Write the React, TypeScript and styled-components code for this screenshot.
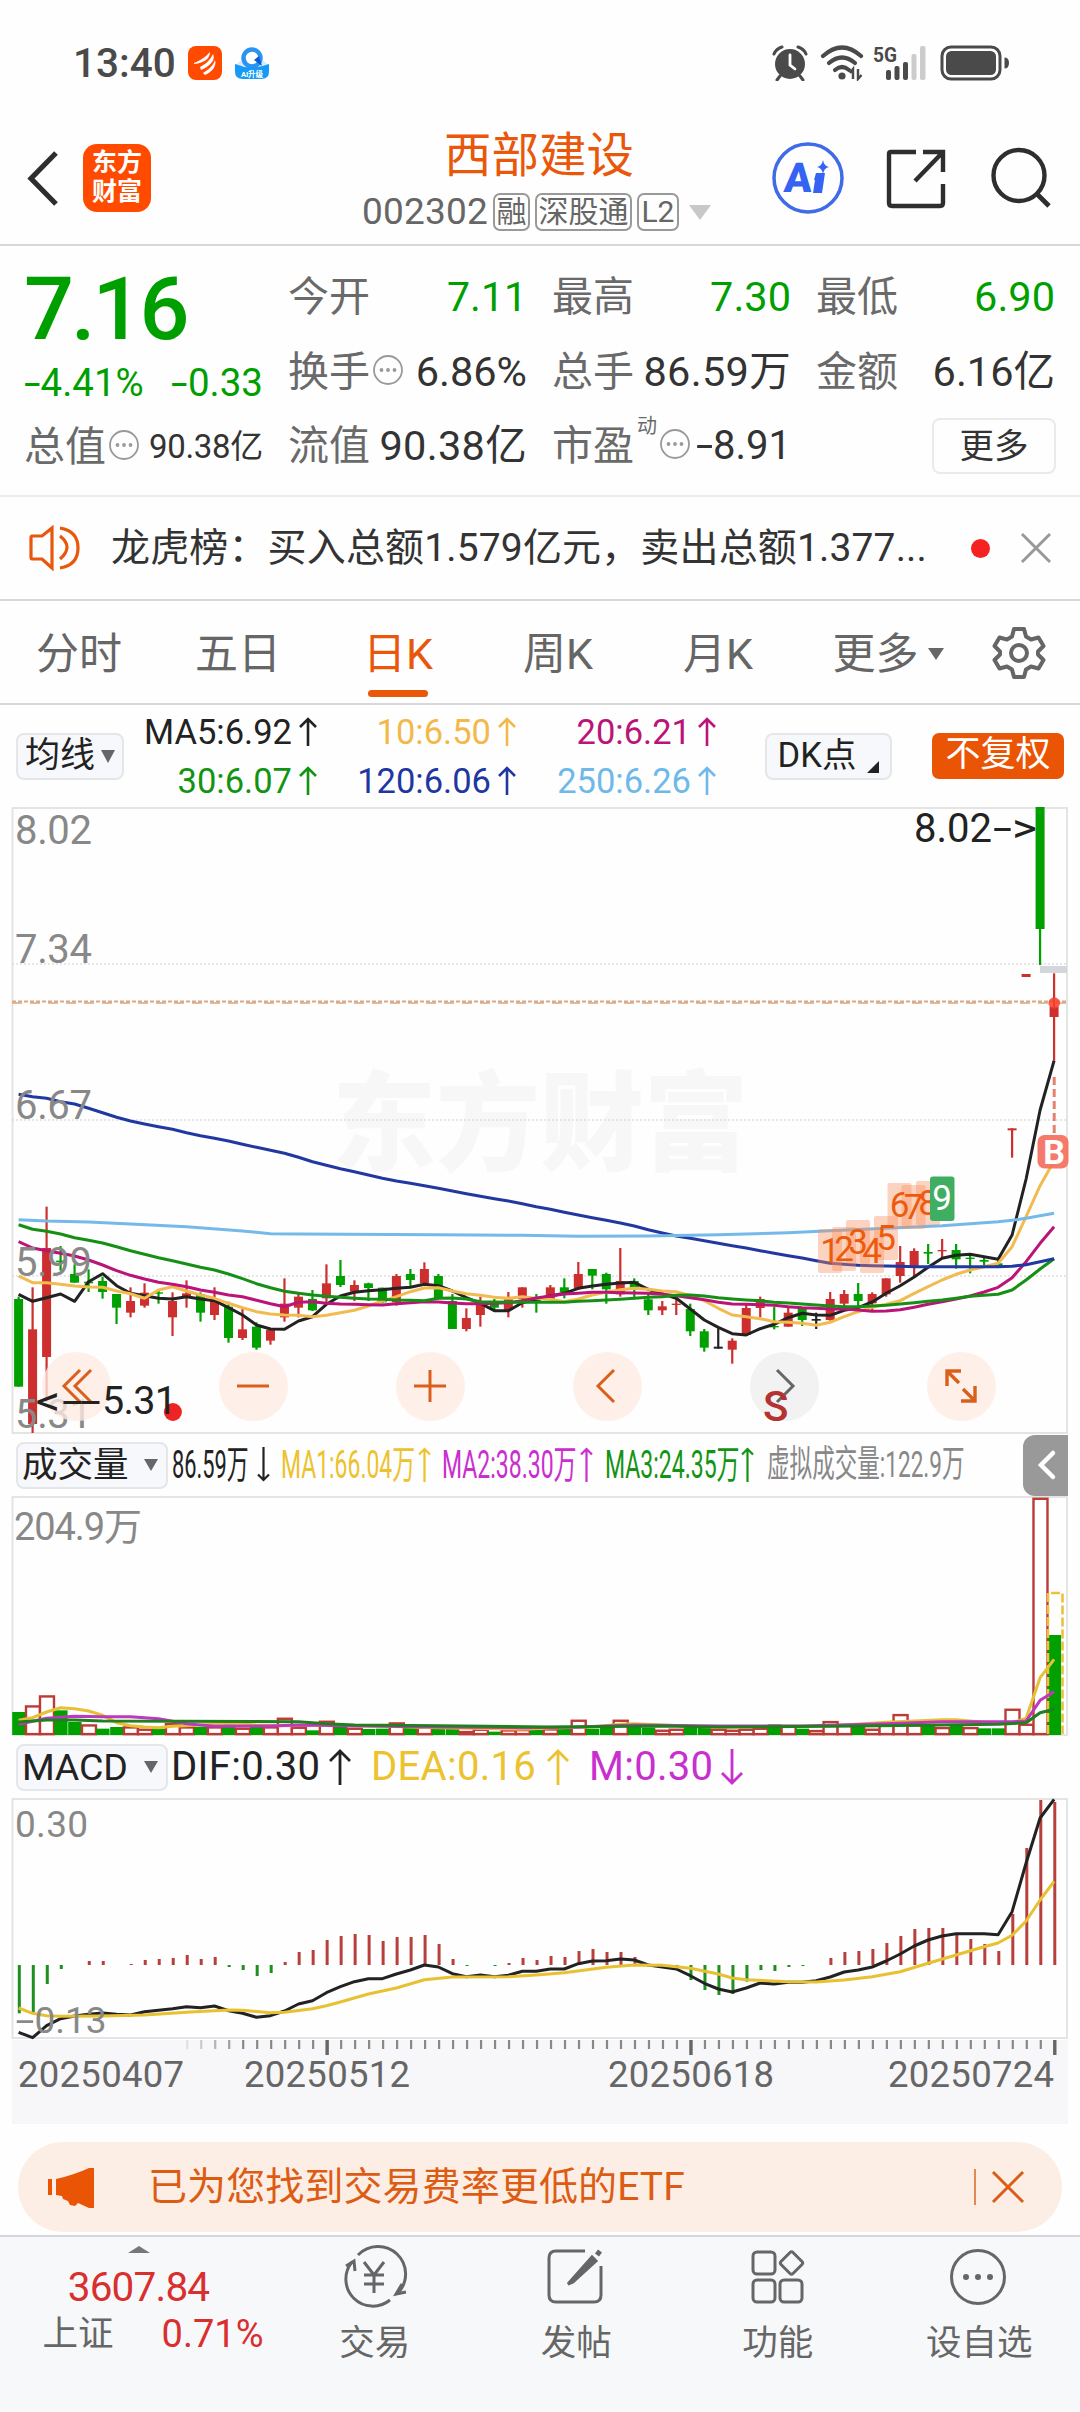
import React from "react";
import styled, { createGlobalStyle } from "styled-components";

const GlobalStyle = createGlobalStyle`
  * { box-sizing: border-box; }
  body {
    margin: 0;
    background: #fefefe;
    font-family: Roboto, "Noto Sans CJK SC", sans-serif;
    color: #333;
  }
  svg { display: block; flex: none; }
`;

const ORANGE = "#e8570a";
const GREEN = "#009f00";
const GREY = "#666";

/* ---------- shared pieces ---------- */

const Screen = styled.div`
  width: 1080px;
  height: 2412px;
  display: flex;
  flex-direction: column;
  overflow: hidden;
`;

const Txt = styled.span<{ $size: number; $color?: string; $ls?: number; $weight?: number }>`
  font-size: ${(p) => p.$size}px;
  line-height: 1.2;
  color: ${(p) => p.$color ?? "#333"};
  letter-spacing: ${(p) => p.$ls ?? 0}px;
  font-weight: ${(p) => p.$weight ?? 400};
  white-space: nowrap;
`;

const Minus = styled.span`
  display: inline-block;
  width: .43em;
  transform: scaleX(1.55);
  transform-origin: left center;
`;

const Fit = styled.span<{ $w: number; $scale: number; $size: number; $color: string }>`
  display: block;
  width: ${(p) => p.$w}px;
  font-size: ${(p) => p.$size}px;
  line-height: 1.2;
  color: ${(p) => p.$color};
  white-space: nowrap;
  transform: scaleX(${(p) => p.$scale});
  transform-origin: left center;
`;

const Caret = styled.i<{ $w: number; $h: number; $color: string }>`
  width: 0;
  height: 0;
  border-left: ${(p) => p.$w / 2}px solid transparent;
  border-right: ${(p) => p.$w / 2}px solid transparent;
  border-top: ${(p) => p.$h}px solid ${(p) => p.$color};
`;

function Arrow({ down, color, w = 18, h = 30, sw = 2.6 }: { down?: boolean; color: string; w?: number; h?: number; sw?: number }) {
  const m = w / 2;
  const d = down
    ? `M${m} 0V${h - 2}M1 ${h - m - 1}L${m} ${h - 2}L${w - 1} ${h - m - 1}`
    : `M${m} ${h}V2M1 ${m + 1}L${m} 2L${w - 1} ${m + 1}`;
  return (
    <svg width={w} height={h}>
      <path d={d} fill="none" stroke={color} strokeWidth={sw} />
    </svg>
  );
}

/* ---------- status bar ---------- */

const Status = styled.div`
  height: 106px;
  padding: 20px 70px 0 73px;
  display: flex;
  align-items: center;
  flex: none;
`;
const StatusIcons = styled.div`
  margin-left: auto;
  display: flex;
  align-items: center;
`;
const Gap = styled.span<{ $w: number }>`
  width: ${(p) => p.$w}px;
  flex: none;
`;

function StatusBar() {
  const c = "#4a4a4a";
  return (
    <Status>
      <Txt $size={40.5} $color={c} $weight={500}>13:40</Txt>
      <Gap $w={12} />
      <svg width="34" height="34" viewBox="0 0 34 34">
        <rect width="34" height="34" rx="8" fill="#ff4a00" />
        <path d="M6 17C11 15 17 12 22 6C22 12 17 17 6 18ZM12 21C18 18 22 14 25 8C28 14 22 20 13 24ZM15 27C20 24 25 20 27 14C29 20 24 26 17 29Z" fill="#fff" />
      </svg>
      <Gap $w={12} />
      <svg width="36" height="34" viewBox="0 0 36 34">
        <path d="M1 20Q8 12 18 12Q28 12 35 20Z" fill="#d4e9fb" />
        <circle cx="18" cy="12" r="8.500" fill="#fff" stroke="#2b93f0" strokeWidth="4.500" />
        <path d="M20 14L28 20L25 10Z" fill="#0a5cd0" />
        <path d="M1 18Q18 25 35 18V26Q35 33 27 33H9Q1 33 1 26Z" fill="#169af5" />
        <text x="18" y="31" fontSize="7.500" textAnchor="middle" fill="#fff" fontWeight="700">AI升级</text>
      </svg>
      <StatusIcons>
        <svg width="36" height="36" viewBox="0 0 36 36">
          <circle cx="18" cy="19" r="15" fill={c} />
          <path d="M2 9Q4 4 10 2M34 9Q32 4 26 2M8 31L5 35M28 31L31 35" stroke={c} strokeWidth="3" fill="none" strokeLinecap="round" />
          <path d="M18 10V20L23 24" stroke="#fff" strokeWidth="2.800" fill="none" strokeLinecap="round" />
        </svg>
        <Gap $w={12} />
        <svg width="44" height="36" viewBox="0 0 44 36">
          <g fill="none" stroke={c} strokeWidth="4.200" strokeLinecap="round">
            <path d="M3 11Q22 -6 41 11" />
            <path d="M9 18Q22 7 35 18" />
            <path d="M15 25Q22 19 29 25" />
          </g>
          <circle cx="22" cy="31" r="3.600" fill={c} />
          <path d="M33 34V24L30 28M38 24V34L41.500 30" fill="none" stroke={c} strokeWidth="2.400" />
        </svg>
        <Gap $w={9} />
        <svg width="54" height="36" viewBox="0 0 54 36">
          <text x="0" y="17" fontSize="21" fontWeight="700" fill={c} textLength="24" lengthAdjust="spacingAndGlyphs">5G</text>
          <g fill={c}>
            <rect x="13" y="25" width="5" height="10" rx="2" />
            <rect x="21.500" y="21" width="5" height="14" rx="2" />
            <rect x="30" y="17" width="5" height="18" rx="2" />
          </g>
          <rect x="38.500" y="9" width="5" height="26" rx="2" fill="#ccc" />
          <rect x="47" y="1" width="5.500" height="34" rx="2" fill="#ccc" />
        </svg>
        <Gap $w={13} />
        <svg width="70" height="36" viewBox="0 0 70 36">
          <rect x="2" y="2" width="58" height="32" rx="9" fill="none" stroke={c} strokeWidth="3" />
          <rect x="6" y="6" width="50" height="24" rx="5.500" fill={c} />
          <path d="M64.500 12.500Q69 12.500 69 18Q69 23.500 64.500 23.500Z" fill={c} />
        </svg>
      </StatusIcons>
    </Status>
  );
}

/* ---------- header ---------- */

const Header = styled.header`
  height: 140px;
  border-bottom: 2px solid #d8d8d8;
  display: grid;
  grid-template-columns: 362px 350px 1fr;
  flex: none;
`;
const HeadLeft = styled.div`
  display: flex;
  align-items: flex-start;
  padding: 38px 0 0 26px;
  gap: 25px;
`;
const Brand = styled.div`
  width: 68px;
  height: 68px;
  border-radius: 14px;
  background: #ff4a00;
  color: #fff;
  font: 600 25px/29px "Liberation Serif", "Noto Sans CJK SC", serif;
  text-align: center;
  padding-top: 4px;
`;
const HeadMid = styled.div`
  display: flex;
  flex-direction: column;
`;
const Title = styled.h1`
  margin: 20px 0 0 82px;
  font-size: 47.500px;
  font-weight: 400;
  line-height: 60px;
  color: ${ORANGE};
  white-space: nowrap;
`;
const CodeRow = styled.div`
  display: flex;
  align-items: center;
  height: 40px;
  margin-top: 6px;
  gap: 5px;
  white-space: nowrap;
`;
const Tag = styled.span<{ $w: number }>`
  width: ${(p) => p.$w}px;
  height: 38px;
  flex: none;
  border: 2px solid #999;
  border-radius: 7px;
  color: ${GREY};
  font-size: 30px;
  line-height: 34px;
  text-align: center;
`;
const HeadRight = styled.div`
  display: flex;
  align-items: flex-start;
  padding: 34px 0 0 60px;
`;

function TopHeader() {
  return (
    <Header>
      <HeadLeft>
        <svg width="32" height="68" viewBox="0 0 32 68">
          <path d="M30 9L5 34.500L30 60" fill="none" stroke="#2e2e2e" strokeWidth="5.200" />
        </svg>
        <Brand>东方<br />财富</Brand>
      </HeadLeft>
      <HeadMid>
        <Title>西部建设</Title>
        <CodeRow>
          <Txt $size={37} $color={GREY} $ls={0.2}>002302</Txt>
          <Tag $w={37}>融</Tag>
          <Tag $w={97}>深股通</Tag>
          <Tag $w={42}>L2</Tag>
          <Gap $w={0} />
          <Caret $w={22} $h={15} $color="#c8c8c8" />
        </CodeRow>
      </HeadMid>
      <HeadRight>
        <svg width="72" height="76" viewBox="0 0 72 76">
          <circle cx="36" cy="38" r="34" fill="none" stroke="#3f6ae8" strokeWidth="3.500" />
          <text x="12" y="52" fontSize="41" fontWeight="900" fill="#3563f2" transform="skewX(-4) translate(3 0)">A</text>
          <path d="M44 33H53L50 53H41L43 40H42Z" fill="#3563f2" />
          <path d="M51 20Q52 26 57 27Q52 28 51 34Q50 28 45 27Q50 26 51 20Z" fill="#3563f2" />
        </svg>
        <Gap $w={41} />
        <svg width="62" height="76" viewBox="0 0 62 76">
          <path d="M31 12H6Q4 12 4 14V63Q4 66 7 66H55Q58 66 58 63V44" fill="none" stroke="#2e2e2e" strokeWidth="4.400" />
          <path d="M38 12H58V32M58 12L30 41" fill="none" stroke="#2e2e2e" strokeWidth="4.400" />
        </svg>
        <Gap $w={44} />
        <svg width="62" height="76" viewBox="0 0 62 76">
          <circle cx="28" cy="35.500" r="25.500" fill="none" stroke="#2e2e2e" strokeWidth="4.400" />
          <path d="M46 54L58 66" stroke="#2e2e2e" strokeWidth="4.800" />
        </svg>
      </HeadRight>
    </Header>
  );
}

/* ---------- quote ---------- */

const Quote = styled.section`
  height: 251px;
  padding: 14px 24px 0;
  display: grid;
  grid-template-columns: repeat(4, 239px);
  column-gap: 25px;
  border-bottom: 2px solid #ececec;
  flex: none;
`;
const Col = styled.div`
  display: flex;
  flex-direction: column;
`;
const Cell = styled.div<{ $h?: number }>`
  height: ${(p) => p.$h ?? 74.5}px;
  display: flex;
  align-items: center;
  justify-content: space-between;
  white-space: nowrap;
`;
const LabelBox = styled.span`
  display: flex;
  align-items: center;
  gap: 3px;
`;
const Label = styled.span`
  font-size: 41px;
  line-height: 50px;
  color: #6a6a6a;
`;
const Sup = styled.sup`
  font-size: 20px;
  line-height: 22px;
  color: #6a6a6a;
  margin-top: -40px;
`;
const MoreButton = styled.button`
  margin: 0 -1px 0 auto;
  width: 124px;
  height: 56px;
  border: 2px solid #e9eaec;
  border-radius: 8px;
  background: #fefefe;
  font: 34.500px/48px Roboto, "Noto Sans CJK SC", sans-serif;
  color: #333;
  padding: 0;
`;

function Dots() {
  return (
    <svg width="30" height="34" viewBox="0 0 30 34">
      <circle cx="15" cy="15" r="14" fill="none" stroke="#999" strokeWidth="1.800" />
      <circle cx="8.500" cy="15" r="1.900" fill="#999" />
      <circle cx="15" cy="15" r="1.900" fill="#999" />
      <circle cx="21.500" cy="15" r="1.900" fill="#999" />
    </svg>
  );
}

function QuotePanel() {
  return (
    <Quote>
      <Col>
        <Cell $h={97}>
          <Txt $size={88} $color={GREEN} $weight={500} $ls={-3}>7.16</Txt>
        </Cell>
        <Cell $h={53}>
          <Txt $size={38.5} $color={GREEN}><Minus>-</Minus>4.41%</Txt>
          <Txt $size={38.5} $color={GREEN}><Minus>-</Minus>0.33</Txt>
        </Cell>
        <Cell $h={74}>
          <LabelBox><Label>总值</Label><Dots /></LabelBox>
          <Txt $size={33} $ls={-0.3}>90.38亿</Txt>
        </Cell>
      </Col>
      <Col>
        <Cell><Label>今开</Label><Txt $size={41} $color={GREEN}>7.11</Txt></Cell>
        <Cell><LabelBox><Label>换手</Label><Dots /></LabelBox><Txt $size={41.5}>6.86%</Txt></Cell>
        <Cell><Label>流值</Label><Txt $size={41.5} $ls={0.3}>90.38亿</Txt></Cell>
      </Col>
      <Col>
        <Cell><Label>最高</Label><Txt $size={41.5} $color={GREEN}>7.30</Txt></Cell>
        <Cell><Label>总手</Label><Txt $size={41.5} $ls={0.3}>86.59万</Txt></Cell>
        <Cell><LabelBox><Label>市盈</Label><Sup>动</Sup><Dots /></LabelBox><Txt $size={40}><Minus>-</Minus>8.91</Txt></Cell>
      </Col>
      <Col>
        <Cell><Label>最低</Label><Txt $size={41.5} $color={GREEN}>6.90</Txt></Cell>
        <Cell><Label>金额</Label><Txt $size={41.5}>6.16亿</Txt></Cell>
        <Cell><MoreButton>更多</MoreButton></Cell>
      </Col>
    </Quote>
  );
}

/* ---------- news ---------- */

const News = styled.section`
  height: 104px;
  display: flex;
  align-items: center;
  padding: 0 28px 0 28px;
  border-bottom: 2px solid #d8d8d8;
  flex: none;
`;
const RedDot = styled.i`
  width: 19px;
  height: 19px;
  margin-left: auto;
  border-radius: 50%;
  background: #f52222;
`;

function NewsBar() {
  return (
    <News>
      <svg width="54" height="46" viewBox="0 0 54 46">
        <g fill="none" stroke={ORANGE} strokeWidth="3.200">
          <path d="M4 11H14L24 3V43L14 34H4Q3 34 3 32V13Q3 11 4 11Z" />
          <path d="M32 11Q46 22 32 34" />
          <path d="M32 3Q50 6 50 23Q50 40 32 43" />
        </g>
      </svg>
      <Gap $w={29} />
      <Txt $size={39} $ls={0.15}>龙虎榜：买入总额1.579亿元，卖出总额1.377...</Txt>
      <RedDot />
      <Gap $w={30} />
      <svg width="32" height="32" viewBox="0 0 32 32">
        <path d="M2 2L30 30M30 2L2 30" stroke="#999" strokeWidth="3" />
      </svg>
    </News>
  );
}

/* ---------- period tabs ---------- */

const Tabs = styled.nav`
  height: 104px;
  display: grid;
  grid-template-columns: 158px 160px 160px 160px 160px 180px 82px;
  border-bottom: 2px solid #d8d8d8;
  flex: none;
`;
const Tab = styled.div<{ $active?: boolean }>`
  display: flex;
  flex-direction: column;
  align-items: center;
  padding-top: 25px;
  font-size: 43px;
  line-height: 56px;
  color: ${(p) => (p.$active ? ORANGE : GREY)};
  white-space: nowrap;
`;
const Underline = styled.i`
  width: 60px;
  height: 7px;
  border-radius: 4px;
  background: ${ORANGE};
  margin-top: 8px;
`;
const Inline = styled.span<{ $gap: number }>`
  display: flex;
  align-items: center;
  gap: ${(p) => p.$gap}px;
`;
const IndexLine = styled(Inline)`
  margin-left: 29px;
`;

function PeriodTabs() {
  return (
    <Tabs>
      <Tab>分时</Tab>
      <Tab>五日</Tab>
      <Tab $active>日K<Underline /></Tab>
      <Tab>周K</Tab>
      <Tab>月K</Tab>
      <Tab><Inline $gap={9}>更多<Caret $w={16} $h={12} $color={GREY} /></Inline></Tab>
      <Tab>
        <svg width="54" height="54" viewBox="0 0 54 54">
          <path
            d="M22 3H32L34 10.500L39 13.500L46.500 11.500L51.500 20L46 25.500V28.500L51.500 34L46.500 42.500L39 40.500L34 43.500L32 51H22L20 43.500L15 40.500L7.500 42.500L2.500 34L8 28.500V25.500L2.500 20L7.500 11.500L15 13.500L20 10.500Z"
            fill="none" stroke={GREY} strokeWidth="4" strokeLinejoin="round"
          />
          <circle cx="27" cy="27" r="8" fill="none" stroke={GREY} strokeWidth="4" />
        </svg>
      </Tab>
    </Tabs>
  );
}

/* ---------- moving average legend ---------- */

const Legend = styled.div`
  height: 102px;
  display: flex;
  align-items: center;
  padding: 0 16px 0 16px;
  flex: none;
`;
const Pill = styled.div<{ $w: number; $gap?: number }>`
  width: ${(p) => p.$w}px;
  height: 47px;
  flex: none;
  display: flex;
  align-items: center;
  justify-content: center;
  gap: ${(p) => p.$gap ?? 6}px;
  border: 2px solid #e4e6ea;
  border-radius: 8px;
  background: #f7f8fb;
`;
const WidePill = styled(Pill)`
  justify-content: space-between;
  padding: 0 8px 0 4px;
`;
const Averages = styled.div`
  width: 570px;
  margin-left: 22px;
  display: grid;
  grid-template-columns: 171px 199px 200px;
  row-gap: 1px;
`;
const Average = styled.div<{ $color: string }>`
  height: 48px;
  display: flex;
  align-items: center;
  justify-content: flex-end;
  gap: 7px;
  font-size: 34.500px;
  line-height: 48px;
  color: ${(p) => p.$color};
  white-space: nowrap;
`;
const Corner = styled.i`
  width: 0;
  height: 0;
  align-self: flex-end;
  margin-bottom: 5px;
  border-left: 12px solid transparent;
  border-bottom: 12px solid #222;
`;
const Adjust = styled.div`
  width: 132px;
  height: 46px;
  margin-left: auto;
  border-radius: 7px;
  background: #ea5405;
  color: #fff;
  font-size: 35px;
  line-height: 44px;
  text-align: center;
`;

const AVERAGES: [string, string][] = [
  ["MA5:6.92", "#222"],
  ["10:6.50", "#f2b94a"],
  ["20:6.21", "#bb1478"],
  ["30:6.07", "#129412"],
  ["120:6.06", "#1f37a0"],
  ["250:6.26", "#6fb9ea"],
];

function AverageLegend() {
  return (
    <Legend>
      <Pill $w={108}><Txt $size={35} $color="#222">均线</Txt><Caret $w={15} $h={13} $color={GREY} /></Pill>
      <Averages>
        {AVERAGES.map(([t, c]) => (
          <Average key={t} $color={c}>{t}<Arrow color={c} h={29} /></Average>
        ))}
      </Averages>
      <Gap $w={49} />
      <Pill $w={127} $gap={11}><Txt $size={34.5} $color="#222">DK点</Txt><Corner /></Pill>
      <Adjust>不复权</Adjust>
    </Legend>
  );
}

/* ---------- charts ---------- */

const X0 = 18.6;
const STEP = 13.993;
const cx = (i: number) => X0 + STEP * i;

type Pt = [number, number];
const line = (pts: Pt[], y: (v: number) => number) => pts.map(([i, v]) => `${cx(i).toFixed(1)},${y(v).toFixed(1)}`).join(" ");
const seq = (vs: number[]): Pt[] => vs.map((v, i) => [i, v]);

const priceY = (v: number) => 323 + v / 3;

// [kind, body top, body bottom, high, low]
const CANDLES: [string, number, number, number, number][] = [
  ["g", 507, 770, 500, 770], ["r", 598, 882, 472, 909], ["r", 354, 681, 230, 815], ["g", 392, 397, 348, 422],
  ["g", 432, 458, 403, 458], ["g", 455, 460, 418, 486], ["g", 453, 486, 440, 506], ["g", 492, 533, 492, 582],
  ["r", 513, 548, 472, 562], ["r", 488, 527, 460, 533], ["g", 487, 491, 478, 521], ["r", 513, 562, 487, 618],
  ["r", 490, 500, 451, 533], ["g", 493, 548, 487, 575], ["r", 513, 555, 472, 570], ["g", 530, 624, 515, 638],
  ["r", 598, 624, 537, 630], ["g", 590, 653, 577, 659], ["r", 600, 632, 598, 644], ["r", 521, 562, 445, 575],
  ["r", 500, 533, 492, 562], ["g", 507, 541, 480, 543], ["r", 460, 505, 403, 520], ["g", 438, 465, 390, 471],
  ["r", 465, 485, 451, 513], ["g", 460, 474, 458, 513], ["g", 473, 517, 473, 520], ["r", 438, 517, 432, 527],
  ["g", 432, 450, 417, 471], ["r", 417, 460, 397, 465], ["g", 438, 507, 432, 508], ["g", 513, 597, 492, 597],
  ["r", 564, 597, 535, 604], ["r", 520, 555, 500, 590], ["g", 515, 533, 507, 545], ["r", 508, 540, 486, 562],
  ["r", 472, 507, 472, 533], ["g", 505, 515, 492, 548], ["r", 472, 507, 465, 510], ["g", 472, 487, 445, 505],
  ["r", 432, 475, 396, 480], ["g", 417, 437, 417, 478], ["g", 432, 478, 428, 521], ["r", 453, 493, 354, 500],
  ["g", 453, 472, 445, 508], ["g", 508, 541, 487, 555], ["r", 529, 541, 513, 555], ["r", 521, 525, 500, 555],
  ["g", 537, 604, 521, 618], ["g", 604, 653, 597, 665], ["k", 650, 656, 595, 656], ["r", 632, 659, 625, 701],
  ["r", 534, 615, 525, 618], ["r", 507, 534, 500, 562], ["g", 588, 592, 530, 598], ["r", 548, 590, 530, 590],
  ["g", 534, 570, 534, 588], ["k", 567, 572, 548, 597], ["r", 507, 570, 486, 572], ["r", 492, 521, 480, 530],
  ["g", 492, 513, 459, 530], ["r", 492, 520, 487, 540], ["r", 445, 493, 445, 500], ["r", 396, 438, 348, 458],
  ["r", 363, 412, 355, 438], ["g", 366, 371, 342, 402], ["r", 360, 364, 327, 382], ["g", 360, 388, 342, 416],
  ["g", 383, 387, 370, 430], ["g", 390, 395, 380, 405], ["g", 400, 408, 388, 410], ["r", -5, 1, -5, 83],
  ["r", -468, -459, -468, -459], ["g", -969, -603, -969, -495], ["r", -370, -339, -470, -208],
];
const FILL: Record<string, string> = { g: "#00a000", r: "#cd2f2f", k: "#222" };

const MA5 = seq([493, 514, 503, 492, 514, 455, 431, 467, 490, 497, 505, 507, 500, 507, 512, 533, 555, 585, 597, 598, 573, 560, 523, 498, 487, 482, 479, 475, 472, 463, 467, 483, 503, 520, 542, 542, 518, 508, 498, 490, 475, 468, 463, 459, 457, 478, 491, 505, 537, 570, 592, 611, 615, 596, 583, 563, 550, 555, 556, 541, 533, 516, 490, 467, 441, 412, 385, 376, 373, 380, 388, 315, 147, -60, -208]);
const MA10 = seq([438, 458, 458, 463, 468, 471, 472, 483, 491, 505, 480, 470, 483, 495, 505, 520, 533, 545, 552, 555, 556, 560, 556, 548, 541, 528, 513, 500, 485, 474, 473, 483, 491, 496, 502, 505, 500, 505, 508, 515, 507, 495, 487, 479, 475, 478, 483, 485, 497, 512, 535, 555, 560, 566, 575, 577, 580, 586, 577, 560, 545, 532, 523, 512, 490, 470, 450, 433, 420, 410, 400, 350, 260, 167, 92]);
const MA20 = seq([335, 354, 362, 370, 378, 390, 405, 422, 436, 447, 457, 463, 470, 480, 487, 495, 500, 511, 521, 530, 517, 515, 520, 522, 523, 524, 525, 521, 518, 515, 516, 519, 521, 521, 520, 518, 512, 504, 498, 492, 490, 487, 487, 488, 489, 490, 493, 497, 503, 509, 517, 522, 523, 524, 526, 530, 533, 535, 537, 537, 540, 544, 543, 539, 532, 523, 515, 507, 498, 486, 472, 443, 395, 340, 290]);
const MA30 = seq([284, 298, 304, 312, 323, 331, 339, 350, 362, 373, 383, 392, 402, 412, 420, 432, 446, 461, 473, 484, 490, 495, 499, 502, 505, 507, 508, 510, 511, 512, 505, 504, 507, 515, 516, 517, 517, 517, 517, 517, 514, 512, 510, 508, 505, 502, 500, 496, 495, 498, 503, 507, 510, 512, 517, 519, 522, 525, 528, 530, 530, 528, 526, 522, 518, 514, 510, 505, 499, 496, 493, 480, 450, 417, 386]);
const MA120 = seq([-107, -100, -95, -85, -78, -65, -52, -38, -27, -18, -10, -2, 8, 17, 25, 33, 43, 52, 61, 70, 82, 95, 106, 116, 125, 135, 145, 153, 160, 167, 175, 183, 191, 199, 206, 213, 221, 230, 238, 247, 255, 263, 271, 279, 288, 299, 309, 318, 325, 332, 340, 347, 354, 362, 370, 377, 384, 392, 400, 403, 406, 407, 408, 409, 410, 410, 410, 410, 410, 410, 410, 409, 404, 395, 386]);
const MA250: Pt[] = [[0, 269], [2, 273], [5, 276], [8, 282], [12, 290], [16, 303], [18, 311], [20, 312], [30, 314], [36, 316], [40, 319], [45, 318], [50, 314], [55, 308], [58, 302], [62, 295], [66, 287], [70, 275], [71, 271], [72, 265], [73, 257], [74, 250]];

// count badges: [digit, x, y]
const COUNTS: [string, number, number][] = [
  ["1", 818, 422], ["2", 832, 420], ["3", 846, 413], ["4", 860, 422], ["5", 874, 409], ["6", 887.5, 376], ["7", 901.5, 378], ["8", 916, 374],
];

const ChartBox = styled.div<{ $h: number }>`
  position: relative;
  height: ${(p) => p.$h}px;
  flex: none;
`;
const Controls = styled.div`
  position: absolute;
  left: 42px;
  top: 545px;
  display: flex;
  gap: 108.500px;
`;
const RoundButton = styled.span<{ $muted?: boolean }>`
  width: 68.500px;
  height: 68.500px;
  border-radius: 50%;
  background: ${(p) => (p.$muted ? "rgba(238,238,238,.75)" : "rgba(254,236,226,.78)")};
  display: flex;
  align-items: center;
  justify-content: center;
`;
const Overlay = styled.svg`
  position: absolute;
  left: 0;
  top: 0;
`;

function Frame({ h }: { h: number }) {
  return <rect x="12.500" y="1" width="1054.500" height={h - 2} fill="none" stroke="#e2e2e2" strokeWidth="1.800" />;
}

function AxisLabel({ x, y, size, w, children, color = "#888", stretch }: { x: number; y: number; size: number; w: number; children: string; color?: string; stretch?: boolean }) {
  return <text x={x} y={y} fontSize={size} fill={color} textLength={w} lengthAdjust={stretch ? "spacingAndGlyphs" : "spacing"}>{children}</text>;
}

const ICONS = ["M24 4L8 20L24 36M35 4L19 20L35 36", "M4 20H36", "M4 20H36M20 4V36", "M27 4L11 20L27 36", "M13 4L29 20L13 36", "M6 20V5H20M6 5L18 17M34 20V35H20M34 35L22 23"];

function PriceChart() {
  return (
    <ChartBox $h={627}>
      <svg width="1080" height="627" viewBox="0 0 1080 627">
        <Frame h={627} />
        <text x="332" y="355" fontSize="108" fontWeight="900" fill="#f7f7f7" textLength="416" lengthAdjust="spacingAndGlyphs">东方财富</text>
        {[157, 313, 469].map((y) => (
          <line key={y} x1="12" x2="1067" y1={y} y2={y} stroke="#cfcfcf" strokeWidth="1" strokeDasharray="2 2" />
        ))}
        <line x1="12" x2="1067" y1="194.500" y2="194.500" stroke="#d8a888" strokeWidth="2" strokeDasharray="4 2" />
        <line x1="12" x2="1067" y1="196" y2="196" stroke="#d8a87c" strokeWidth="1.600" strokeDasharray="10 8" />
        {CANDLES.map(([k, t, b, hi, lo], i) => (
          <g key={i} fill={FILL[k]}>
            <rect x={cx(i) - 1.1} y={priceY(hi)} width="2.200" height={(lo - hi) / 3} />
            <rect x={cx(i) - 4.5} y={priceY(t)} width="9" height={(b - t) / 3} />
          </g>
        ))}
        <g fill="none" strokeWidth="3" strokeLinejoin="round">
          <polyline points={line(MA5, priceY)} stroke="#222" />
          <polyline points={line(MA10, priceY)} stroke="#f2bb50" />
          <polyline points={line(MA20, priceY)} stroke="#bb1478" />
          <polyline points={line(MA30, priceY)} stroke="#159015" />
          <polyline points={line(MA120, priceY)} stroke="#2138a0" />
          <polyline points={line(MA250, priceY)} stroke="#74b9e8" />
        </g>
        {COUNTS.map(([n, x, y]) => (
          <rect key={n} x={x} y={y} width="24" height="44" rx="2" fill="#fb8f5c" fillOpacity=".38" />
        ))}
        {COUNTS.map(([n, x, y]) => (
          <text key={n} x={x + 12} y={y + 34} fontSize="35" textAnchor="middle" fill="#ee5a0c">{n}</text>
        ))}
        <rect x="930" y="369.500" width="24.500" height="44.500" rx="3" fill="#3fae63" />
        <text x="942" y="403" fontSize="35" textAnchor="middle" fill="#fff">9</text>
        <rect x="1040" y="159" width="27" height="7" fill="#d3d6dc" />
        <circle cx="1054.200" cy="196" r="5.800" fill="#f8402c" fillOpacity=".85" />
        <line x1="1054.200" x2="1054.200" y1="270" y2="328" stroke="#e88070" strokeWidth="3" strokeDasharray="8 4" />
        <rect x="1037.500" y="328" width="31" height="33.500" rx="7" fill="#f5705f" fillOpacity=".93" />
        <text x="1054" y="356.500" fontSize="34" fontWeight="700" textAnchor="middle" fill="#fff">B</text>
        <circle cx="172.900" cy="605" r="9" fill="#ee2424" />
        <AxisLabel x={15} y={37} size={40} w={77}>8.02</AxisLabel>
        <AxisLabel x={15} y={156} size={40} w={77}>7.34</AxisLabel>
        <AxisLabel x={15} y={312} size={40} w={77}>6.67</AxisLabel>
        <AxisLabel x={15} y={469} size={40} w={77}>5.99</AxisLabel>
        <AxisLabel x={15} y={621} size={40} w={77}>5.31</AxisLabel>
        <AxisLabel x={914} y={35} size={40} w={78} color="#222">8.02</AxisLabel>
        <AxisLabel x={993} y={35} size={40} w={19} color="#222" stretch>-</AxisLabel>
        <AxisLabel x={1012} y={35} size={40} w={25} color="#222" stretch>&gt;</AxisLabel>
      </svg>
      <Controls>
        {ICONS.map((d, i) => (
          <RoundButton key={d} $muted={i === 4}>
            <svg width="40" height="40" viewBox="0 0 40 40">
              <path d={d} fill="none" stroke={i === 4 ? GREY : "#d8601c"} strokeWidth={i === 5 ? 3.4 : 3} />
            </svg>
          </RoundButton>
        ))}
      </Controls>
      <Overlay width="1080" height="627" viewBox="0 0 1080 627">
        <AxisLabel x={35.5} y={608} size={40} w={25} color="#222" stretch>&lt;</AxisLabel>
        <AxisLabel x={62} y={608} size={40} w={21} color="#222" stretch>-</AxisLabel>
        <AxisLabel x={80} y={608} size={40} w={21} color="#222" stretch>-</AxisLabel>
        <AxisLabel x={102} y={607} size={39.5} w={75} color="#222">5.31</AxisLabel>
        <text x="763" y="614" fontSize="42" fontWeight="500" fill="#b43232">S</text>
      </Overlay>
    </ChartBox>
  );
}

/* ---------- volume ---------- */

const IndicatorRow = styled.div<{ $h: number }>`
  height: ${(p) => p.$h}px;
  display: flex;
  align-items: center;
  padding-left: 16px;
  flex: none;
`;
const FitItem = styled.div<{ $w: number }>`
  width: ${(p) => p.$w}px;
  flex: none;
  display: flex;
  align-items: center;
`;
const Drawer = styled.div`
  margin-left: auto;
  margin-right: 12px;
  width: 45px;
  height: 61px;
  border-radius: 12px 0 0 12px;
  background: #999;
  display: flex;
  align-items: center;
  justify-content: center;
`;

const volY = (v: number) => v / 3 - 65;
const VOLUMES =
  "g843 r823 r793 g838 g873 r880 g893 g888 r886 r893 g893 r876 r886 g888 r886 g880 r890 g888 r886 r860 r887 g898 r869 g882 r890 g894 g893 r874 g890 r887 g892 g890 r900 r893 g902 r895 r894 g897 r892 g893 r866 g893 g888 r866 g888 g890 r896 r893 g890 g890 r893 r896 r893 r890 g880 r882 g893 r897 r870 r879 g885 r893 r876 r849 r880 g884 r888 g882 r888 g892 g892 r833 r878 r200 g612"
    .split(" ").map((s) => [s[0], Number(s.slice(1))] as [string, number]);
const VMA1: Pt[] = [[0, 868], [1, 860], [2, 843], [3, 830], [4, 833], [5, 840], [6, 853], [7, 875], [8, 884], [9, 888], [10, 890], [11, 886], [13, 882], [15, 876], [17, 882], [19, 884], [22, 882], [26, 886], [30, 890], [36, 895], [38, 891], [41, 888], [43, 880], [44, 878], [46, 882], [50, 889], [54, 886], [58, 885], [62, 874], [64, 870], [66, 866], [67, 866], [69, 874], [71, 875], [72, 862], [73, 740], [74, 685]];
const VMA2: Pt[] = [[0, 880], [2, 862], [4, 856], [6, 857], [8, 857], [10, 863], [12, 878], [14, 886], [18, 885], [20, 882], [30, 888], [36, 890], [40, 888], [44, 882], [50, 885], [56, 885], [62, 878], [66, 872], [71, 872], [72, 870], [73, 808], [74, 782]];
const VMA3: Pt[] = [[0, 873], [2, 867], [4, 867], [6, 870], [20, 872], [22, 878], [24, 882], [30, 884], [38, 888], [46, 885], [50, 888], [60, 885], [70, 880], [72, 875], [73, 845], [74, 835]];

const VOLUME_LEGEND: { text: string; color: string; w: number; tw: number; scale: number; down?: boolean }[] = [
  { text: "86.59万", color: "#222", w: 109, tw: 85, scale: 0.56, down: true },
  { text: "MA1:66.04万", color: "#ecc22e", w: 161, tw: 137, scale: 0.588 },
  { text: "MA2:38.30万", color: "#c92fcf", w: 163, tw: 138, scale: 0.59 },
  { text: "MA3:24.35万", color: "#149414", w: 162, tw: 136, scale: 0.59 },
];

function VolumeChart() {
  return (
    <>
      <IndicatorRow $h={62}>
        <WidePill $w={152}><Txt $size={35.5} $color="#222">成交量</Txt><Caret $w={15} $h={12} $color={GREY} /></WidePill>
        <Gap $w={4} />
        {VOLUME_LEGEND.map((v) => (
          <FitItem key={v.text} $w={v.w}>
            <Fit $w={v.tw} $scale={v.scale} $size={39} $color={v.color}>{v.text}</Fit>
            <Arrow color={v.color} w={13} h={35} sw={2.2} down={v.down} />
          </FitItem>
        ))}
        <Fit $w={200} $scale={0.61} $size={37} $color="#888">虚拟成交量:122.9万</Fit>
        <Drawer>
          <svg width="22" height="32" viewBox="0 0 22 32">
            <path d="M18 4L6 16L18 28" fill="none" stroke="#fff" strokeWidth="4.500" strokeLinecap="round" />
          </svg>
        </Drawer>
      </IndicatorRow>
      <ChartBox $h={240}>
        <svg width="1080" height="240" viewBox="0 0 1080 240">
          <Frame h={240} />
          {VOLUMES.map(([k, v], i) =>
            k === "g" ? (
              <rect key={i} x={cx(i) - 6.4} y={volY(v)} width="13.400" height={volY(912) - volY(v)} fill="#00a000" />
            ) : (
              <rect key={i} x={cx(i) - 6.6} y={volY(v) + 1.1} width="14" height={volY(912) - volY(v) - 2} fill="#fff" stroke="#bd3b36" strokeWidth="2.400" />
            ),
          )}
          <path d="M1048 238V97H1062.500V238" fill="none" stroke="#ecc040" strokeWidth="2.600" strokeDasharray="9 3" />
          <g fill="none" strokeWidth="3" strokeLinejoin="round">
            <polyline points={line(VMA1, volY)} stroke="#e6c135" />
            <polyline points={line(VMA2, volY)} stroke="#bd38bd" />
            <polyline points={line(VMA3, volY)} stroke="#208020" />
          </g>
          <AxisLabel x={14} y={44} size={38} w={128}>204.9万</AxisLabel>
        </svg>
      </ChartBox>
    </>
  );
}

/* ---------- MACD ---------- */

const macdY = (v: number) => v / 3 - 58;
const MACD_BARS = [820, 820, 732, 687, 675, 663, 663, 675, 672, 660, 657, 654, 645, 657, 651, 681, 690, 708, 699, 666, 636, 630, 600, 588, 582, 585, 603, 591, 591, 585, 612, 657, 678, 675, 678, 669, 654, 660, 648, 651, 633, 627, 636, 636, 651, 675, 684, 690, 720, 750, 765, 762, 725, 690, 693, 681, 678, 675, 654, 636, 633, 627, 609, 588, 567, 564, 564, 580, 597, 612, 633, 522, 324, 180, 186];
const DIF = seq([877, 893, 857, 836, 828, 823, 819, 823, 825, 815, 811, 806, 800, 803, 798, 812, 820, 832, 827, 813, 792, 782, 758, 740, 725, 716, 716, 702, 690, 675, 681, 701, 710, 705, 710, 706, 694, 694, 687, 687, 671, 663, 662, 657, 660, 675, 681, 687, 707, 730, 747, 756, 744, 729, 732, 727, 727, 722, 711, 696, 690, 681, 663, 642, 618, 600, 588, 581, 581, 581, 584, 515, 369, 234, 178]);
const DEA: Pt[] = [[0, 804], [1, 820], [2, 827], [3, 829], [6, 828], [9, 825], [12, 817], [15, 810], [16, 811], [18, 818], [19, 817], [21, 806], [22, 797], [23, 786], [25, 762], [27, 744], [29, 719], [31, 711], [35, 710], [37, 705], [39, 698], [42, 682], [44, 675], [46, 676], [48, 685], [50, 702], [51, 714], [52, 719], [55, 725], [57, 726], [59, 720], [61, 710], [63, 695], [65, 670], [67, 645], [69, 620], [70, 609], [71, 586], [72, 543], [73, 480], [74, 424]];
const TICKS = Array.from({ length: 63 }, (_, n) => n + 12);
const DATES: [string, number][] = [["20250407", 18], ["20250512", 244], ["20250618", 608], ["20250724", 888]];

const MACD_LEGEND: { text: string; color: string; w: number; tw: number; down?: boolean }[] = [
  { text: "DIF:0.30", color: "#222", w: 200, tw: 157 },
  { text: "DEA:0.16", color: "#ecc22e", w: 218, tw: 175 },
  { text: "M:0.30", color: "#c92fcf", w: 180, tw: 131, down: true },
];
const MacdText = styled.span<{ $w: number; $color: string }>`
  width: ${(p) => p.$w}px;
  font-size: 40px;
  line-height: 48px;
  letter-spacing: .3px;
  margin-left: -1px;
  margin-right: 1px;
  color: ${(p) => p.$color};
`;

function MacdChart() {
  return (
    <>
      <IndicatorRow $h={62}>
        <WidePill $w={152}><Txt $size={37.5} $color="#222" $ls={-0.2}>MACD</Txt><Caret $w={15} $h={12} $color={GREY} /></WidePill>
        <Gap $w={4} />
        {MACD_LEGEND.map((m) => (
          <FitItem key={m.text} $w={m.w}>
            <MacdText $w={m.tw} $color={m.color}>{m.text}</MacdText>
            <Arrow color={m.color} w={22} h={36} sw={2.8} down={m.down} />
          </FitItem>
        ))}
      </IndicatorRow>
      <ChartBox $h={326}>
        <svg width="1080" height="326" viewBox="0 0 1080 326">
          <rect x="12" y="242" width="1056" height="84" fill="#f7f7fa" />
          <Frame h={241} />
          {MACD_BARS.map((v, i) => (
            <rect key={i} x={cx(i) - 0.8} y={Math.min(macdY(v), 167)} width="3" height={Math.abs(macdY(v) - 167)} fill={v > 675 ? "#1f8f1f" : "#b8403c"} />
          ))}
          <g fill="none" strokeWidth="3" strokeLinejoin="round">
            <polyline points={line(DIF, macdY)} stroke="#222" />
            <polyline points={line(DEA, macdY)} stroke="#e8c132" />
          </g>
          {TICKS.map((i) => {
            const long = i === 22 || i === 48 || i === 74;
            return (
              <rect key={i} x={cx(i) - (long ? 1 : 0.4)} y="242" width={long ? 3.4 : 2.2} height={long ? 15 : 9} fill={long ? "#666" : "#888"} opacity={i < 16 ? (i - 11) * 0.2 : 1} />
            );
          })}
          <AxisLabel x={15} y={39} size={37} w={73}>0.30</AxisLabel>
          <AxisLabel x={15.5} y={235} size={37} w={19} stretch>-</AxisLabel>
          <AxisLabel x={34.5} y={235} size={37} w={72}>0.13</AxisLabel>
          {DATES.map(([d, x]) => (
            <AxisLabel key={d} x={x} y={289} size={36.5} w={166} color={GREY}>{d}</AxisLabel>
          ))}
        </svg>
      </ChartBox>
    </>
  );
}

/* ---------- promo banner ---------- */

const Banner = styled.div`
  height: 90px;
  margin: 18px 18px 3px;
  padding: 0 37px 0 28px;
  border-radius: 45px;
  background: #fceee4;
  display: flex;
  align-items: center;
  flex: none;
`;
const Rule = styled.i`
  width: 2px;
  height: 36px;
  margin-left: auto;
  background: #e08a58;
`;

function Promo() {
  return (
    <Banner>
      <svg width="50" height="44" viewBox="0 0 50 44">
        <path d="M2 14H6V30H2ZM10 14Q28 10 43 3H48V43H43L32 38L29 41L24 40L22 36L17 34L16 31L10 30Z" fill="#ea5405" />
      </svg>
      <Gap $w={52} />
      <Txt $size={39} $color="#dd5c14" $ls={0.1}>已为您找到交易费率更低的ETF</Txt>
      <Rule />
      <Gap $w={15} />
      <svg width="34" height="34" viewBox="0 0 34 34">
        <path d="M2 2L32 32M32 2L2 32" stroke="#dd5c14" strokeWidth="3" />
      </svg>
    </Banner>
  );
}

/* ---------- bottom navigation ---------- */

const BottomNav = styled.nav`
  height: 177px;
  border-top: 2px solid #d5d5dc;
  background: #f7f8fa;
  display: grid;
  grid-template-columns: 274px repeat(4, 201.500px);
  flex: none;
`;
const IndexBox = styled.div`
  display: flex;
  flex-direction: column;
  align-items: center;
  padding: 9px 0 0 3px;
`;
const CaretUp = styled(Caret)`
  transform: rotate(180deg);
  margin-bottom: 10px;
`;
const NavItem = styled.div`
  display: flex;
  flex-direction: column;
  align-items: center;
  padding-top: 7px;
  gap: 14px;
`;

const NAV: [string, React.ReactNode][] = [
  ["交易", (
    <>
      <path d="M16 11A27 27 0 0 1 56 49M48 56A27 27 0 0 1 10 18" />
      <path d="M4 22L12 17L13 27M60 40L54 50L64 48" />
      <path d="M22 18L32 31L42 18M32 31V49M22 31H42M22 40H42" />
    </>
  )],
  ["发帖", (
    <>
      <path d="M42 7H13Q6 7 6 14V51Q6 58 13 58H51Q58 58 58 51V22" />
      <path d="M25 40L49 13L53 17L30 38Z" fill={GREY} stroke={GREY} />
      <path d="M54 11L57 7" strokeWidth="5" />
    </>
  )],
  ["功能", (
    <>
      <rect x="8" y="8" width="22" height="22" rx="4" />
      <rect x="8" y="36" width="22" height="22" rx="4" />
      <rect x="35" y="36" width="22" height="22" rx="4" />
      <path d="M45 8.500Q46.500 7 48 8.500L57 17.500Q58.500 19 57 20.500L48 29.500Q46.500 31 45 29.500L36 20.500Q34.500 19 36 17.500Z" />
    </>
  )],
  ["设自选", (
    <>
      <circle cx="32" cy="33" r="26.500" />
      <g fill={GREY} stroke="none"><circle cx="20" cy="33" r="3" /><circle cx="32" cy="33" r="3" /><circle cx="44" cy="33" r="3" /></g>
    </>
  )],
];

function Footer() {
  return (
    <BottomNav>
      <IndexBox>
        <CaretUp $w={22} $h={7} $color="#777" />
        <Txt $size={40.5} $color="#d92f2f" $ls={-0.8}>3607.84</Txt>
        <IndexLine $gap={48}>
          <Txt $size={35.5} $color={GREY}>上证</Txt>
          <Txt $size={38} $color="#d92f2f">0.71%</Txt>
        </IndexLine>
      </IndexBox>
      {NAV.map(([label, icon]) => (
        <NavItem key={label}>
          <svg width="66" height="64" viewBox="0 0 66 64" fill="none" stroke={GREY} strokeWidth="3">{icon}</svg>
          <Txt $size={35.5} $color={GREY}>{label}</Txt>
        </NavItem>
      ))}
    </BottomNav>
  );
}

export default function App() {
  return (
    <Screen>
      <GlobalStyle />
      <StatusBar />
      <TopHeader />
      <QuotePanel />
      <NewsBar />
      <PeriodTabs />
      <AverageLegend />
      <PriceChart />
      <VolumeChart />
      <MacdChart />
      <Promo />
      <Footer />
    </Screen>
  );
}
